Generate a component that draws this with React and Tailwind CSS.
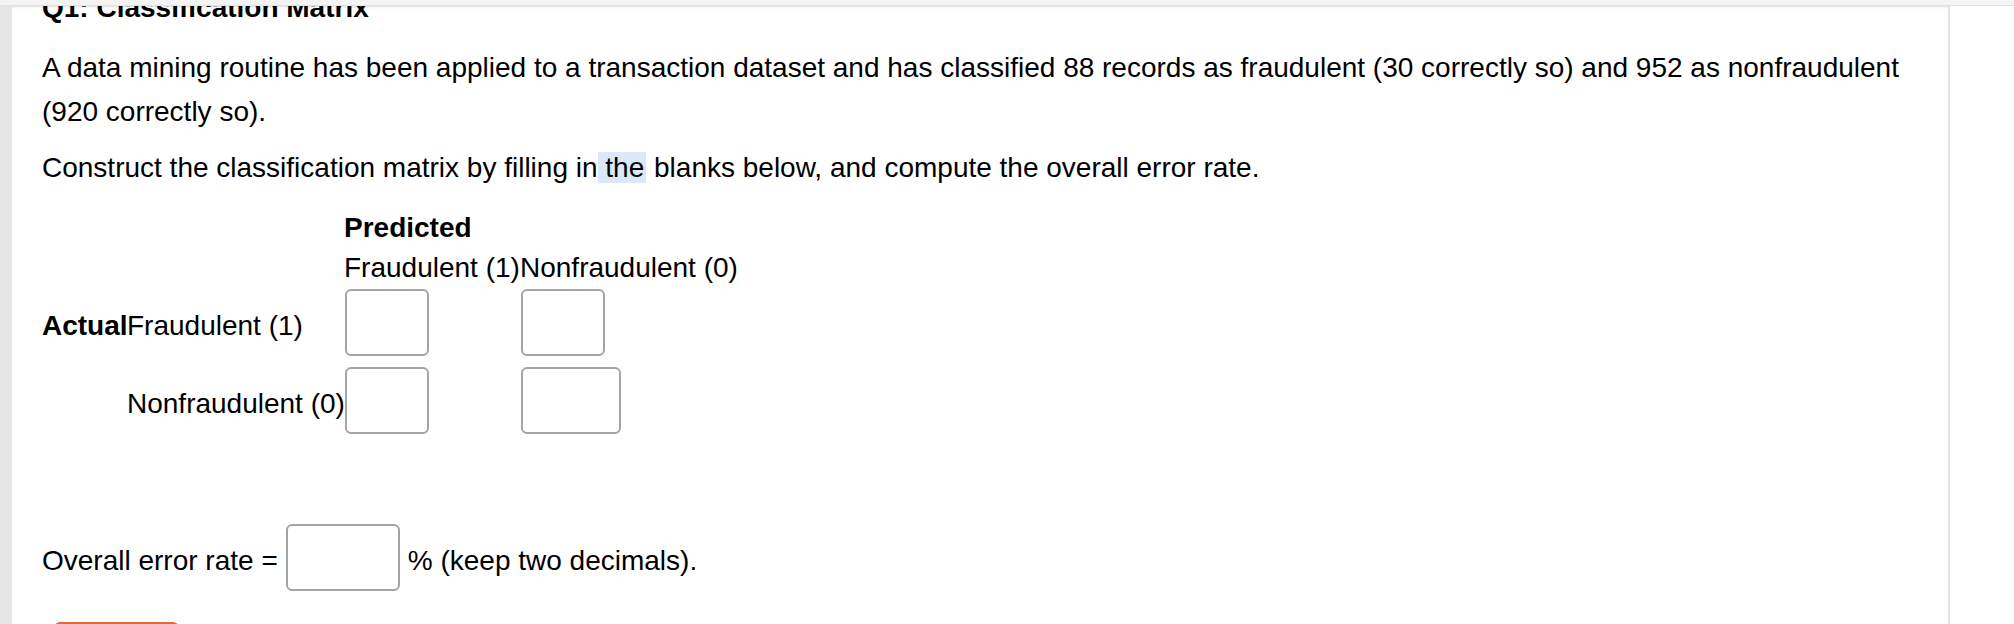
import React from "react";

// =========================
// INPUT BOX
// =========================
const Blank = ({ width = "w-[84px]" }) => (
  <input
    type="text"
    className={`
      ${width}
      h-[67px]
      border-2
      border-[#a2a4a8]
      rounded-md
      bg-white
      outline-none
    `}
  />
);

const App = () => {
  return (
    <div className="h-[624px] overflow-hidden bg-white text-black font-['Liberation_Sans',Arial,sans-serif]">

      {/* =========================
          TOP BAR
      ========================= */}
      <div className="h-[6px] bg-[#f4f4f4] border-b border-[#e2e2e2] shadow-sm" />

      <div className="flex h-[618px]">

        {/* LEFT STRIP */}
        <div className="w-[12px] bg-[#e6e6e6]" />

        {/* =========================
            QUESTION PANEL
        ========================= */}
        <div className="w-[1938px] border-r-2 border-[#e3e3e3] pl-[30px] pr-[30px] overflow-hidden">

          <h2 className="-mt-[14px] text-[28px] leading-[32px] font-bold whitespace-nowrap">
            Q1: Classification Matrix
          </h2>

          <p className="mt-[22px] text-[28px] leading-[44px]">
            A data mining routine has been applied to a transaction dataset and has classified 88 records as fraudulent (30 correctly so) and 952 as nonfraudulent (920 correctly so).
          </p>

          <p className="mt-[12px] text-[28px] leading-[44px]">
            Construct the classification matrix by filling in<span className="bg-[#dce8f8] pr-[2px]"> the</span> blanks below, and compute the overall error rate.
          </p>

          {/* =========================
              MATRIX
          ========================= */}
          <div className="mt-[18px] text-[28px] leading-[40px] whitespace-nowrap">

            <div className="flex">
              <div className="w-[302px] shrink-0" />
              <div className="font-bold">Predicted</div>
            </div>

            <div className="flex">
              <div className="w-[302px] shrink-0" />
              <div className="w-[176px] shrink-0">Fraudulent (1)</div>
              <div>Nonfraudulent (0)</div>
            </div>

            <div className="flex items-center h-[67px] mt-px">
              <div className="w-[85px] shrink-0 pt-[6px] font-bold">Actual</div>
              <div className="w-[217px] shrink-0 pt-[6px]">Fraudulent (1)</div>
              <div className="w-[176px] shrink-0 pl-px">
                <Blank />
              </div>
              <div className="pl-px">
                <Blank />
              </div>
            </div>

            <div className="flex items-center h-[67px] mt-[11px]">
              <div className="w-[85px] shrink-0" />
              <div className="w-[217px] shrink-0 pt-[6px]">Nonfraudulent (0)</div>
              <div className="w-[176px] shrink-0 pl-px">
                <Blank />
              </div>
              <div className="pl-px">
                <Blank width="w-[100px]" />
              </div>
            </div>

          </div>

          {/* =========================
              ERROR RATE
          ========================= */}
          <div className="mt-[90px] flex items-center gap-2 h-[67px] text-[28px] leading-[40px] whitespace-nowrap">
            <span className="pt-[6px]">Overall error rate =</span>
            <Blank width="w-[114px]" />
            <span className="pt-[6px]">% (keep two decimals).</span>
          </div>

          <button className="mt-[31px] ml-[12px] w-[125px] h-[44px] rounded-md bg-[#e2683c]" />

        </div>

        <div className="flex-1 bg-white" />
      </div>
    </div>
  );
};

export default App;
